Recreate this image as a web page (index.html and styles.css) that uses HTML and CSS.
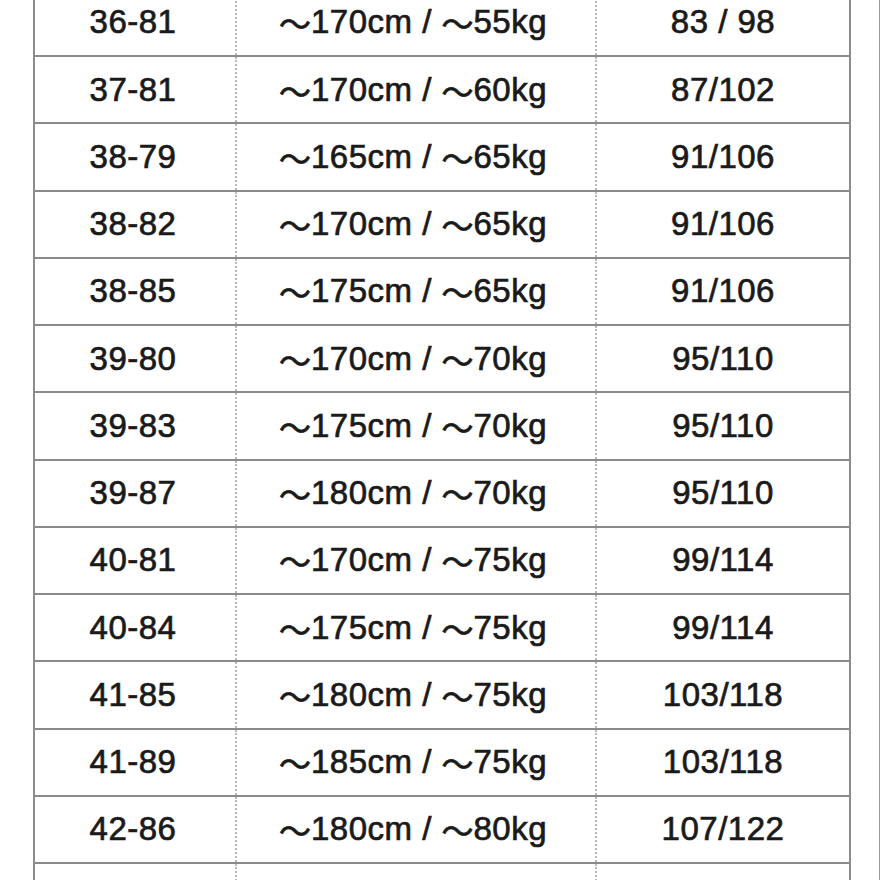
FILE: index.html
```html
<!DOCTYPE html>
<html lang="ja">
<head>
<meta charset="utf-8">
<title>Size chart</title>
<link rel="stylesheet" href="styles.css">
</head>
<body>
<div class="page">
  <div class="chart">
    <div class="row"><div class="cell c1">36-81</div><div class="cell c2"><span class="t">～</span>170cm / <span class="t">～</span>55kg</div><div class="cell c3">83 / 98</div></div>
    <div class="row"><div class="cell c1">37-81</div><div class="cell c2"><span class="t">～</span>170cm / <span class="t">～</span>60kg</div><div class="cell c3">87/102</div></div>
    <div class="row"><div class="cell c1">38-79</div><div class="cell c2"><span class="t">～</span>165cm / <span class="t">～</span>65kg</div><div class="cell c3">91/106</div></div>
    <div class="row"><div class="cell c1">38-82</div><div class="cell c2"><span class="t">～</span>170cm / <span class="t">～</span>65kg</div><div class="cell c3">91/106</div></div>
    <div class="row"><div class="cell c1">38-85</div><div class="cell c2"><span class="t">～</span>175cm / <span class="t">～</span>65kg</div><div class="cell c3">91/106</div></div>
    <div class="row"><div class="cell c1">39-80</div><div class="cell c2"><span class="t">～</span>170cm / <span class="t">～</span>70kg</div><div class="cell c3">95/110</div></div>
    <div class="row"><div class="cell c1">39-83</div><div class="cell c2"><span class="t">～</span>175cm / <span class="t">～</span>70kg</div><div class="cell c3">95/110</div></div>
    <div class="row"><div class="cell c1">39-87</div><div class="cell c2"><span class="t">～</span>180cm / <span class="t">～</span>70kg</div><div class="cell c3">95/110</div></div>
    <div class="row"><div class="cell c1">40-81</div><div class="cell c2"><span class="t">～</span>170cm / <span class="t">～</span>75kg</div><div class="cell c3">99/114</div></div>
    <div class="row"><div class="cell c1">40-84</div><div class="cell c2"><span class="t">～</span>175cm / <span class="t">～</span>75kg</div><div class="cell c3">99/114</div></div>
    <div class="row"><div class="cell c1">41-85</div><div class="cell c2"><span class="t">～</span>180cm / <span class="t">～</span>75kg</div><div class="cell c3">103/118</div></div>
    <div class="row"><div class="cell c1">41-89</div><div class="cell c2"><span class="t">～</span>185cm / <span class="t">～</span>75kg</div><div class="cell c3">103/118</div></div>
    <div class="row"><div class="cell c1">42-86</div><div class="cell c2"><span class="t">～</span>180cm / <span class="t">～</span>80kg</div><div class="cell c3">107/122</div></div>
    <div class="row"><div class="cell c1">42-89</div><div class="cell c2"><span class="t">～</span>185cm / <span class="t">～</span>80kg</div><div class="cell c3">107/122</div></div>
  </div>
</div>
</body>
</html>
```
FILE: styles.css
```css
html, body {
  margin: 0;
  padding: 0;
  background: #ffffff;
  overflow: hidden;
}
.page {
  width: 880px;
  height: 880px;
  overflow: hidden;
  border-right: 1px solid #9a9a9a;
  box-sizing: border-box;
}
.chart {
  margin-top: -10.25px;
  margin-left: 33px;
  width: 818px;
  border-left: 2px solid #8c8c8c;
  border-right: 2px solid #8c8c8c;
  box-sizing: border-box;
  font-family: "Liberation Sans", "Noto Sans CJK JP", sans-serif;
  font-size: 33px;
  color: #1a1a1a;
  letter-spacing: 0.5px;
}
.row {
  display: grid;
  grid-template-columns: 202px 360px 1fr;
  height: 67.25px;
  box-sizing: border-box;
  border-bottom: 2px solid #8a8a8a;
}
.cell {
  display: flex;
  align-items: center;
  justify-content: center;
  box-sizing: border-box;
  -webkit-text-stroke: 0.7px #1a1a1a;
}
.c1, .c2 {
  border-right: 2px dotted #b8b8b8;
}
.c1 {
  padding-right: 4px;
}
.c2 {
  padding-right: 6px;
  white-space: pre;
}
.t {
  font-family: "Noto Sans CJK JP", sans-serif;
  font-size: 32px;
  letter-spacing: 0;
}
```
